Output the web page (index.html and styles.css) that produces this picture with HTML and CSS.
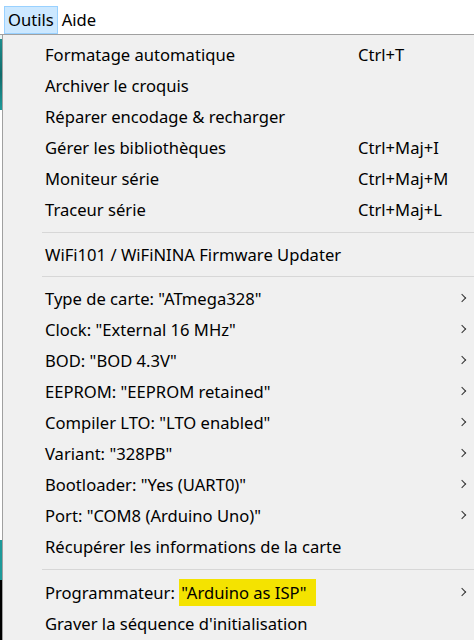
FILE: index.html
```html
<!DOCTYPE html>
<html lang="fr">
<head>
<meta charset="utf-8">
<title>Outils</title>
<link rel="stylesheet" href="styles.css">
</head>
<body>
<div class="page">
  <div class="menubar">
    <span class="top-item active">Outils</span>
    <span class="top-item">Aide</span>
  </div>
  <div class="below">
    <div class="strip"></div>
    <div class="menu">
      <div class="item"><span class="label">Formatage automatique</span><span class="key">Ctrl+T</span></div>
      <div class="item"><span class="label">Archiver le croquis</span></div>
      <div class="item"><span class="label">Réparer encodage &amp; recharger</span></div>
      <div class="item"><span class="label">Gérer les bibliothèques</span><span class="key">Ctrl+Maj+I</span></div>
      <div class="item"><span class="label">Moniteur série</span><span class="key">Ctrl+Maj+M</span></div>
      <div class="item"><span class="label">Traceur série</span><span class="key">Ctrl+Maj+L</span></div>
      <div class="sep first"></div>
      <div class="item"><span class="label">WiFi101 / WiFiNINA Firmware Updater</span></div>
      <div class="sep"></div>
      <div class="item sub"><span class="label">Type de carte: "ATmega328"</span><span class="arrow"></span></div>
      <div class="item sub"><span class="label">Clock: "External 16 MHz"</span><span class="arrow"></span></div>
      <div class="item sub"><span class="label">BOD: "BOD 4.3V"</span><span class="arrow"></span></div>
      <div class="item sub"><span class="label">EEPROM: "EEPROM retained"</span><span class="arrow"></span></div>
      <div class="item sub"><span class="label">Compiler LTO: "LTO enabled"</span><span class="arrow"></span></div>
      <div class="item sub"><span class="label">Variant: "328PB"</span><span class="arrow"></span></div>
      <div class="item sub"><span class="label">Bootloader: "Yes (UART0)"</span><span class="arrow"></span></div>
      <div class="item sub"><span class="label">Port: "COM8 (Arduino Uno)"</span><span class="arrow"></span></div>
      <div class="item"><span class="label">Récupérer les informations de la carte</span></div>
      <div class="sep last"></div>
      <div class="item sub"><span class="label">Programmateur: <mark class="hl">"Arduino as ISP"</mark></span><span class="arrow"></span></div>
      <div class="item"><span class="label">Graver la séquence d'initialisation</span></div>
    </div>
  </div>
</div>
</body>
</html>
```

FILE: styles.css
```css
* { box-sizing: border-box; }
html, body {
  margin: 0;
  padding: 0;
  width: 474px;
  height: 640px;
  overflow: hidden;
  background: #ffffff;
}
body {
  font-family: "Noto Sans", "Open Sans", sans-serif;
  font-size: 16.6px;
  color: #000000;
}
.page {
  display: flex;
  flex-direction: column;
  height: 640px;
}
.menubar {
  height: 35px;
  display: flex;
  align-items: flex-start;
  padding: 6px 0 0 4px;
  background: #ffffff;
  border-bottom: 1px solid #a0a0a0;
  flex: none;
}
.top-item {
  height: 28px;
  line-height: 26px;
  padding: 0 3px 0 3px;
  border: 1px solid transparent;
}
.top-item.active {
  background: #cce8ff;
  border-color: #99d1ff;
}
.below {
  flex: 1;
  display: flex;
  min-height: 0;
}
.strip {
  width: 2px;
  flex: none;
  background: linear-gradient(to bottom,
    #e8f4f4 0px, #e8f4f4 4px,
    #1d8e8e 4px, #106c6c 40px, #1d9a9a 75px,
    #ffffff 75px, #ffffff 505px,
    #1d9a9a 505px, #1d9a9a 545px,
    #000000 545px);
}
.menu {
  flex: 1;
  background: #f0f0f0;
  border-left: 1px solid #a0a0a0;
  padding-top: 4px;
  display: flex;
  flex-direction: column;
}
.item {
  height: 31px;
  display: flex;
  align-items: center;
  padding-left: 42px;
  position: relative;
  white-space: nowrap;
}
.label { flex: none; }
.key {
  position: absolute;
  left: 355px;
}
.arrow {
  position: absolute;
  left: 456px;
  top: 12px;
  width: 6px;
  height: 6px;
  border-right: 1.4px solid #333333;
  border-top: 1.4px solid #333333;
  transform: rotate(45deg);
}
.hl {
  background: #f4e300;
  color: #000000;
  padding: 2px 10px 2px 2px;
}
.sep {
  height: 13px;
  display: flex;
  align-items: center;
  padding-left: 39px;
}
.sep.first { height: 14px; }
.sep.last { height: 15px; }
.sep::after {
  content: "";
  display: block;
  height: 1px;
  width: 100%;
  background: #d7d7d7;
}
```
